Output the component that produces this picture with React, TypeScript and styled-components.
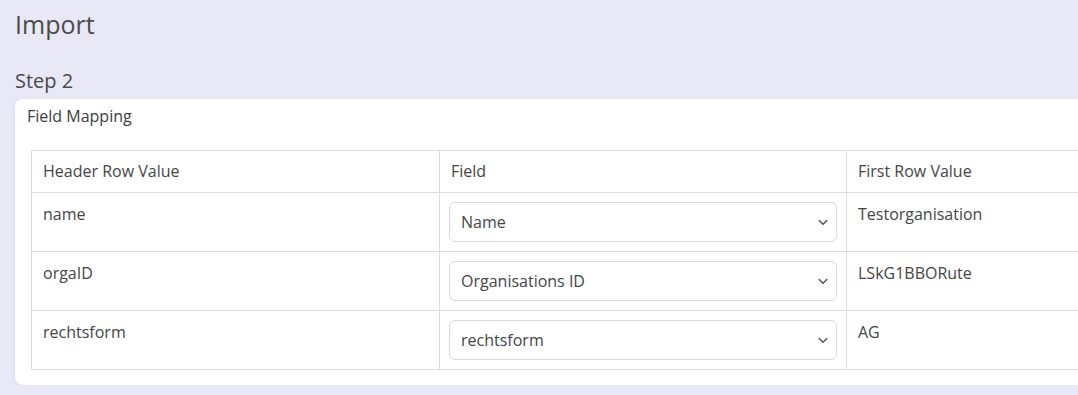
import React from "react";
import styled, { createGlobalStyle } from "styled-components";

const Global = createGlobalStyle`
  html, body { margin: 0; padding: 0; }
  body {
    background: #e9e8f6;
    font-family: "Open Sans", "Noto Sans", sans-serif;
    color: #454545;
    overflow: hidden;
  }
`;

const Page = styled.div`
  padding: 6px 0 0 15px;
  width: 1260px;
`;

const Title = styled.h1`
  margin: 0;
  font-size: 25px;
  font-weight: 400;
  line-height: 36px;
  color: #4a4a4a;
`;

const Subtitle = styled.h2`
  margin: 26px 0 0;
  font-size: 20px;
  font-weight: 400;
  line-height: 26px;
  color: #4a4a4a;
`;

const Card = styled.section`
  margin-top: 5px;
  background: #fff;
  border-radius: 8px;
  box-shadow: 0 2px 4px rgba(120, 120, 160, 0.15);
  padding: 5px 16px 15px;
`;

const CardTitle = styled.div`
  font-size: 16px;
  line-height: 24px;
  margin-left: -4px;
  margin-bottom: 22px;
  color: #3d3d3d;
`;

const Table = styled.table`
  border-collapse: collapse;
  width: 1222px;
  table-layout: fixed;
  font-size: 16px;
`;

const Col = styled.col<{ $w: number }>`
  width: ${(p) => p.$w}px;
`;

const Th = styled.th`
  border: 1px solid #dcdcdc;
  font-weight: 400;
  text-align: left;
  padding: 8px 11px 9px;
  line-height: 24px;
  color: #454545;
`;

const Td = styled.td<{ $select?: boolean }>`
  border: 1px solid #dcdcdc;
  vertical-align: top;
  padding: ${(p) => (p.$select ? "9px 9px" : "9px 11px")};
  line-height: 24px;
  height: 59px;
  box-sizing: border-box;
  color: #454545;
`;

const SelectBox = styled.div`
  display: flex;
  align-items: center;
  justify-content: space-between;
  height: 40px;
  box-sizing: border-box;
  border: 1px solid #d9d9d9;
  border-radius: 6px;
  padding: 0 8px 0 11px;
  font-size: 16px;
  color: #454545;
  background: #fff;
`;

const Chevron = () => (
  <svg width="10" height="7" viewBox="0 0 10 7" fill="none">
    <path d="M1.2 1.5 L5 5.2 L8.8 1.5" stroke="#555" strokeWidth="1.5" strokeLinecap="round" strokeLinejoin="round" />
  </svg>
);

const rows = [
  { header: "name", field: "Name", first: "Testorganisation" },
  { header: "orgaID", field: "Organisations ID", first: "LSkG1BBORute" },
  { header: "rechtsform", field: "rechtsform", first: "AG" },
];

export default function App() {
  return (
    <>
      <Global />
      <Page>
        <Title>Import</Title>
        <Subtitle>Step 2</Subtitle>
        <Card>
          <CardTitle>Field Mapping</CardTitle>
          <Table>
            <colgroup>
              <Col $w={408} />
              <Col $w={407} />
              <Col $w={407} />
            </colgroup>
            <thead>
              <tr>
                <Th>Header Row Value</Th>
                <Th>Field</Th>
                <Th>First Row Value</Th>
              </tr>
            </thead>
            <tbody>
              {rows.map((r) => (
                <tr key={r.header}>
                  <Td>{r.header}</Td>
                  <Td $select>
                    <SelectBox>
                      <span>{r.field}</span>
                      <Chevron />
                    </SelectBox>
                  </Td>
                  <Td>{r.first}</Td>
                </tr>
              ))}
            </tbody>
          </Table>
        </Card>
      </Page>
    </>
  );
}
